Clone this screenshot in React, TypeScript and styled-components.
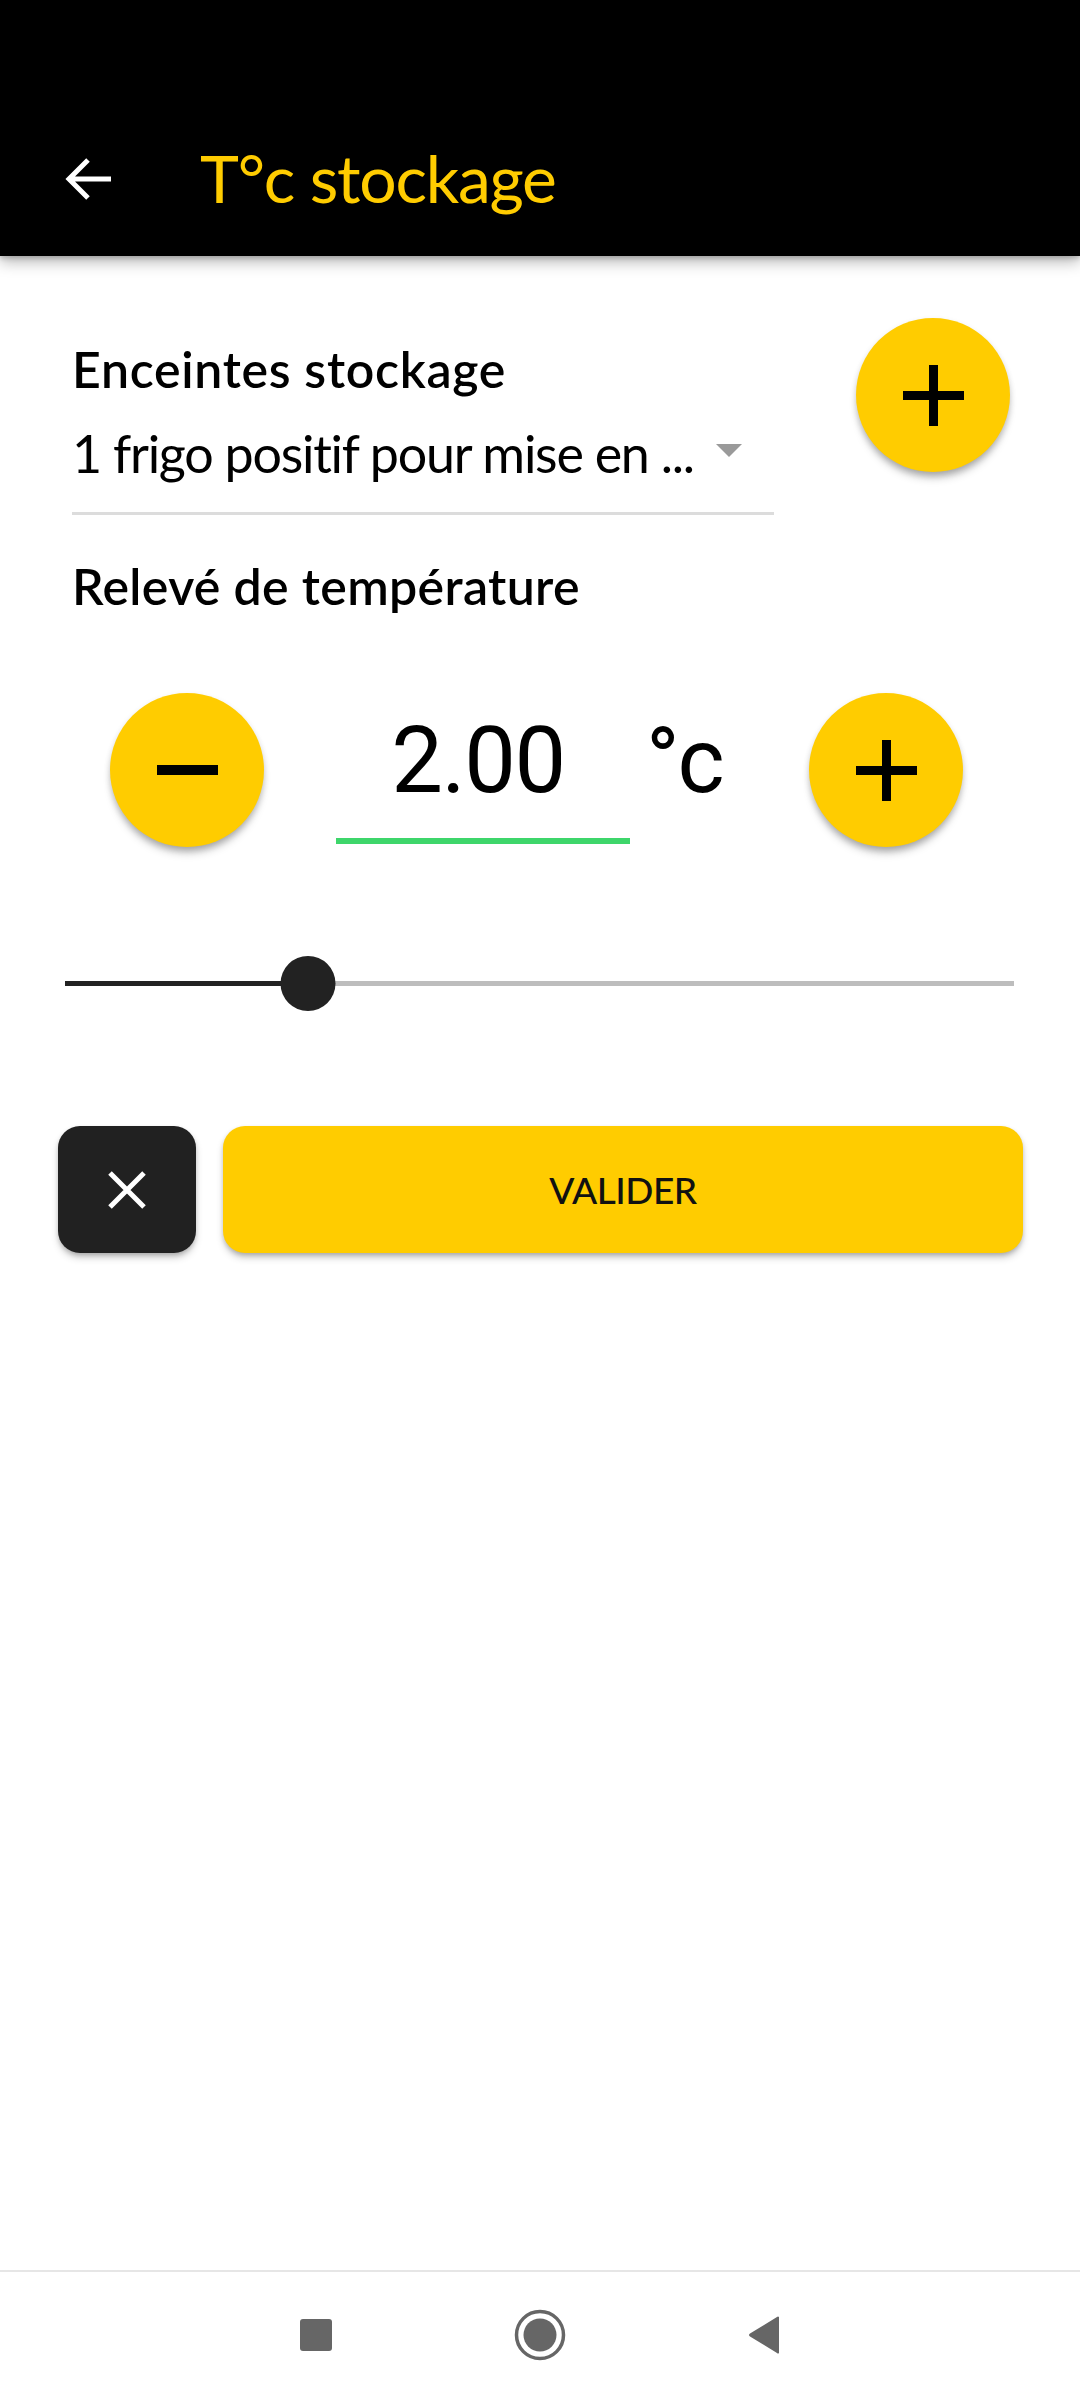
import React from "react";
import styled, { createGlobalStyle } from "styled-components";

const GlobalStyle = createGlobalStyle`
  html, body { margin: 0; padding: 0; background: #ffffff; }
  body { font-family: "Lato", "Noto Sans", sans-serif; }
  * { box-sizing: border-box; }
`;

const YELLOW = "#FFCC00";

const Page = styled.div`
  width: 1080px;
  height: 2400px;
  display: flex;
  flex-direction: column;
  background: #ffffff;
  overflow: hidden;
`;

const Header = styled.header`
  height: 256px;
  background: #000000;
  padding-top: 102px;
  position: relative;
  z-index: 2;
  box-shadow: 0 6px 14px rgba(0, 0, 0, 0.28), 0 2px 5px rgba(0, 0, 0, 0.2);
`;

const Toolbar = styled.div`
  height: 154px;
  display: flex;
  align-items: center;
  padding-left: 65px;
`;

const BackButton = styled.button`
  width: 46px;
  height: 44px;
  padding: 0;
  border: none;
  background: none;
  display: flex;
  align-items: center;
  justify-content: center;
  margin-right: 89px;
`;

const Title = styled.h1`
  margin: 0;
  font-family: "Lato", sans-serif;
  font-weight: 400;
  font-size: 66px;
  line-height: 80px;
  color: ${YELLOW};
  letter-spacing: -1.25px;
  margin-top: -2px;
`;

const Content = styled.main`
  flex: 1;
  display: flex;
  flex-direction: column;
`;

const StorageRow = styled.section`
  display: flex;
  align-items: flex-start;
  margin-top: 62px;
  padding-left: 72px;
  padding-right: 70px;
`;

const StorageColumn = styled.div`
  width: 702px;
  padding-top: 21px;
  display: flex;
  flex-direction: column;
`;

const SectionLabel = styled.div<{ $top?: number; $spacing?: number }>`
  font-family: "Lato", sans-serif;
  font-weight: 600;
  font-size: 50px;
  line-height: 60px;
  color: #000000;
  letter-spacing: ${(p) => p.$spacing ?? 0}px;
  margin-top: ${(p) => p.$top ?? 0}px;
`;

const Select = styled.div`
  margin-top: 23px;
  display: flex;
  align-items: flex-start;
  padding-bottom: 28px;
  border-bottom: 3px solid #dcdcdc;
`;

const SelectText = styled.span`
  font-family: "Lato", sans-serif;
  font-weight: 400;
  font-size: 52px;
  line-height: 62px;
  color: #000000;
  letter-spacing: -1.25px;
  white-space: nowrap;
`;

const Caret = styled.span`
  width: 0;
  height: 0;
  border-left: 13px solid transparent;
  border-right: 13px solid transparent;
  border-top: 13px solid #9a9a9a;
  margin-left: 22px;
  margin-top: 22px;
`;

const Fab = styled.button`
  width: 154px;
  height: 154px;
  border-radius: 50%;
  border: none;
  padding: 0;
  background: ${YELLOW};
  display: flex;
  align-items: center;
  justify-content: center;
  flex-shrink: 0;
  box-shadow: 0 8px 10px -3px rgba(0, 0, 0, 0.28), 0 3px 6px rgba(0, 0, 0, 0.14);
`;

const TopFab = styled(Fab)`
  margin-left: auto;
`;

const TemperatureLabel = styled(SectionLabel)`
  padding-left: 72px;
`;

const StepperRow = styled.section`
  display: flex;
  align-items: flex-start;
  margin-top: 77px;
  padding-left: 110px;
`;

const ValueField = styled.div`
  width: 294px;
  margin-left: 72px;
  margin-top: 22px;
  display: flex;
  flex-direction: column;
  align-items: center;
`;

const ValueText = styled.div`
  font-family: "Roboto", sans-serif;
  font-weight: 400;
  font-size: 92px;
  line-height: 92px;
  letter-spacing: -1.5px;
  color: #000000;
  height: 92px;
  padding-right: 10px;
`;

const FieldUnderline = styled.div`
  width: 100%;
  height: 6px;
  background: #3ed66b;
  margin-top: 31px;
`;

const Unit = styled.div`
  font-family: "Roboto", sans-serif;
  font-weight: 400;
  font-size: 90px;
  line-height: 90px;
  color: #000000;
  margin-left: 16px;
  margin-top: 24px;
  width: 90px;
  letter-spacing: -2px;
`;

const StepFab = styled(Fab)`
  margin-left: 73px;
`;

const SliderWrap = styled.div`
  margin-top: 109px;
  margin-left: 65px;
  width: 949px;
  height: 55px;
  position: relative;
  display: flex;
  align-items: center;
`;

const Track = styled.div`
  width: 100%;
  height: 5px;
  background: #bdbdbd;
  position: relative;
`;

const ActiveTrack = styled.div`
  position: absolute;
  left: 0;
  top: 0;
  height: 100%;
  background: #222222;
`;

const Thumb = styled.div`
  position: absolute;
  top: 0;
  width: 55px;
  height: 55px;
  border-radius: 50%;
  background: #222222;
  transform: translateX(-50%);
`;

const ActionRow = styled.div`
  display: flex;
  gap: 27px;
  margin-top: 115px;
  padding-left: 58px;
`;

const CancelButton = styled.button`
  width: 138px;
  height: 127px;
  border-radius: 22px;
  border: none;
  background: #212121;
  display: flex;
  align-items: center;
  justify-content: center;
  box-shadow: 0 5px 8px -2px rgba(0, 0, 0, 0.3), 0 2px 4px rgba(0, 0, 0, 0.12);
`;

const SubmitButton = styled.button`
  width: 800px;
  height: 127px;
  border-radius: 22px;
  border: none;
  background: ${YELLOW};
  font-family: "Lato", sans-serif;
  font-weight: 500;
  font-size: 37px;
  color: #111111;
  letter-spacing: -0.5px;
  display: flex;
  align-items: center;
  justify-content: center;
  box-shadow: 0 5px 8px -2px rgba(0, 0, 0, 0.3), 0 2px 4px rgba(0, 0, 0, 0.12);
`;

const NavBar = styled.nav`
  height: 130px;
  border-top: 2px solid #e6e6e6;
  display: flex;
  align-items: center;
  justify-content: center;
  padding-bottom: 2px;
`;

const NavSlot = styled.div`
  width: 224px;
  display: flex;
  justify-content: center;
`;

const PlusIcon = () => (
  <svg width="61" height="61" viewBox="0 0 61 61">
    <path d="M30.5 0 V61 M0 30.5 H61" stroke="#000" strokeWidth="9" />
  </svg>
);

const MinusIcon = () => (
  <svg width="61" height="12" viewBox="0 0 61 12">
    <path d="M0 6 H61" stroke="#000" strokeWidth="10" />
  </svg>
);

const BackIcon = () => (
  <svg width="46" height="44" viewBox="0 0 46 44">
    <path d="M46 22 H4 M23 3 L4 22 L23 41" stroke="#fff" strokeWidth="5" fill="none" />
  </svg>
);

const CloseIcon = () => (
  <svg width="38" height="38" viewBox="0 0 38 38">
    <path d="M2 2 L36 36 M36 2 L2 36" stroke="#fff" strokeWidth="5" />
  </svg>
);

const SquareIcon = () => (
  <svg width="34" height="34" viewBox="0 0 34 34">
    <rect x="1" y="1" width="32" height="32" rx="3" fill="#666" />
  </svg>
);

const HomeIcon = () => (
  <svg width="52" height="52" viewBox="0 0 52 52">
    <circle cx="26" cy="26" r="23.5" stroke="#666" strokeWidth="3.5" fill="none" />
    <circle cx="26" cy="26" r="16.5" fill="#666" />
  </svg>
);

const BackNavIcon = () => (
  <svg width="34" height="40" viewBox="0 0 34 40">
    <path d="M32 2 L32 38 Q31 39 30 38 L3 21.5 Q1 20 3 18.5 L30 2 Q31 1 32 2 Z" fill="#666" />
  </svg>
);

export default function App() {
  const percent = (308 - 65) / 949;
  return (
    <Page>
      <GlobalStyle />
      <Header>
        <Toolbar>
          <BackButton aria-label="Retour">
            <BackIcon />
          </BackButton>
          <Title>T°c stockage</Title>
        </Toolbar>
      </Header>
      <Content>
        <StorageRow>
          <StorageColumn>
            <SectionLabel $spacing={0.7}>Enceintes stockage</SectionLabel>
            <Select>
              <SelectText>1 frigo positif pour mise en ...</SelectText>
              <Caret />
            </Select>
          </StorageColumn>
          <TopFab aria-label="Ajouter">
            <PlusIcon />
          </TopFab>
        </StorageRow>
        <TemperatureLabel $top={41} $spacing={0.35}>
          Relevé de température
        </TemperatureLabel>
        <StepperRow>
          <Fab aria-label="Moins">
            <MinusIcon />
          </Fab>
          <ValueField>
            <ValueText>2.00</ValueText>
            <FieldUnderline />
          </ValueField>
          <Unit>°c</Unit>
          <StepFab aria-label="Plus">
            <PlusIcon />
          </StepFab>
        </StepperRow>
        <SliderWrap>
          <Track>
            <ActiveTrack style={{ width: `${percent * 100}%` }} />
          </Track>
          <Thumb style={{ left: `${percent * 100}%` }} />
        </SliderWrap>
        <ActionRow>
          <CancelButton aria-label="Annuler">
            <CloseIcon />
          </CancelButton>
          <SubmitButton>VALIDER</SubmitButton>
        </ActionRow>
      </Content>
      <NavBar>
        <NavSlot>
          <SquareIcon />
        </NavSlot>
        <NavSlot>
          <HomeIcon />
        </NavSlot>
        <NavSlot>
          <BackNavIcon />
        </NavSlot>
      </NavBar>
    </Page>
  );
}
